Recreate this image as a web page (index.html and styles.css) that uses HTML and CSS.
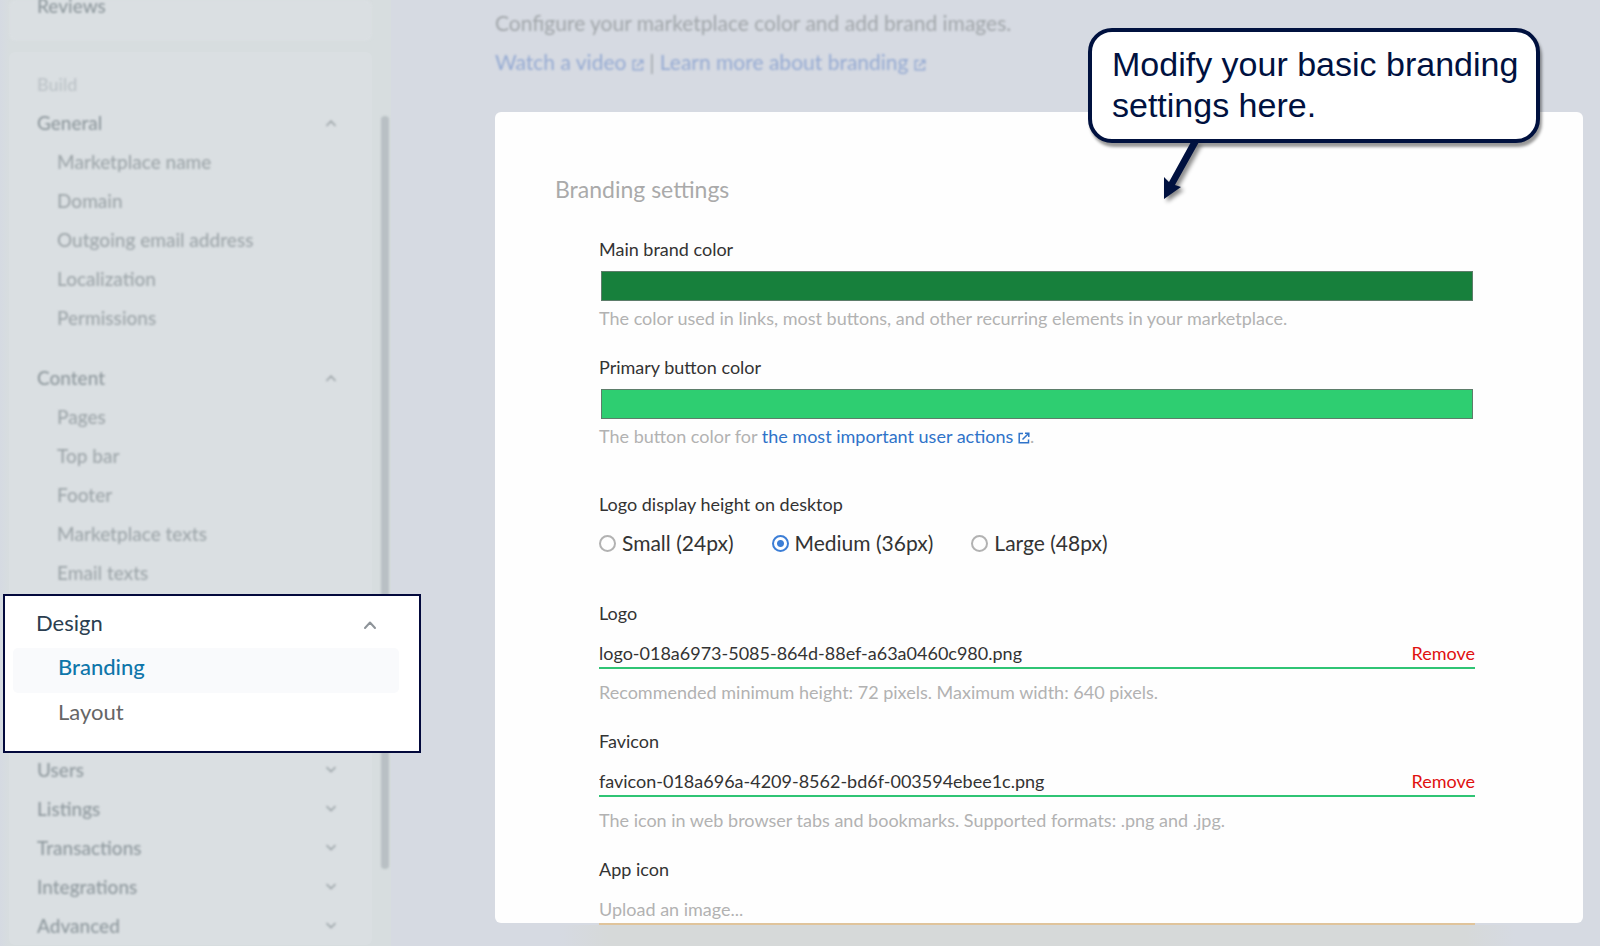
FILE: index.html
```html
<!DOCTYPE html>
<html lang="en">
<head>
<meta charset="utf-8">
<title>Branding settings</title>
<link rel="stylesheet" href="styles.css">
</head>
<body>
<svg class="sprite" aria-hidden="true">
  <symbol id="up" viewBox="0 0 14 10"><path d="M2 8l5-5.500 5 5.500" fill="none" stroke="currentColor" stroke-width="2" stroke-linecap="round" stroke-linejoin="round"/></symbol>
  <symbol id="down" viewBox="0 0 14 10"><path d="M2 2l5 5 5-5" fill="none" stroke="currentColor" stroke-width="2" stroke-linecap="round" stroke-linejoin="round"/></symbol>
  <symbol id="external" viewBox="0 0 12 12"><path d="M5 1.500H1.200V10.800H10.500V7.500M7 1.200H10.800V5M10.500 1.500L4.500 7.500" fill="none" stroke="currentColor" stroke-width="1.500"/></symbol>
</svg>
<div class="app">
  <aside class="sidebar">
    <nav class="cards">
      <div class="card card-top faded"><a class="row section" href="#">Reviews</a></div>
      <div class="card card-build">
        <div class="group faded">
          <span class="row caption">Build</span>
          <button class="row section">General<svg class="chevron"><use href="#up"/></svg></button>
          <a class="row item" href="#">Marketplace name</a>
          <a class="row item" href="#">Domain</a>
          <a class="row item" href="#">Outgoing email address</a>
          <a class="row item" href="#">Localization</a>
          <a class="row item" href="#">Permissions</a>
        </div>
        <div class="group faded">
          <button class="row section">Content<svg class="chevron"><use href="#up"/></svg></button>
          <a class="row item" href="#">Pages</a>
          <a class="row item" href="#">Top bar</a>
          <a class="row item" href="#">Footer</a>
          <a class="row item" href="#">Marketplace texts</a>
          <a class="row item" href="#">Email texts</a>
        </div>
        <div class="spotlight">
          <button class="spot-row">Design<svg class="chevron"><use href="#up"/></svg></button>
          <a class="spot-row spot-item active" href="#">Branding</a>
          <a class="spot-row spot-item" href="#">Layout</a>
        </div>
        <div class="group faded">
          <button class="row section">Users<svg class="chevron"><use href="#down"/></svg></button>
          <button class="row section">Listings<svg class="chevron"><use href="#down"/></svg></button>
          <button class="row section">Transactions<svg class="chevron"><use href="#down"/></svg></button>
          <button class="row section">Integrations<svg class="chevron"><use href="#down"/></svg></button>
          <button class="row section">Advanced<svg class="chevron"><use href="#down"/></svg></button>
        </div>
      </div>
    </nav>
    <div class="track"><div class="thumb"></div></div>
  </aside>
  <main class="main">
    <div class="intro">
      <p>Configure your marketplace color and add brand images.</p>
      <p><a href="#">Watch a video <svg class="external"><use href="#external"/></svg></a> | <a href="#">Learn more about branding <svg class="external"><use href="#external"/></svg></a></p>
    </div>
    <section class="panel">
      <h1>Branding settings</h1>
      <form class="fields">
        <div class="field">
          <label for="brand">Main brand color</label>
          <input class="swatch" type="color" id="brand" value="#17803c">
          <p class="help">The color used in links, most buttons, and other recurring elements in your marketplace.</p>
        </div>
        <div class="field">
          <label for="primary">Primary button color</label>
          <input class="swatch" type="color" id="primary" value="#2ece71">
          <p class="help">The button color for <a href="#">the most important user actions <svg class="external"><use href="#external"/></svg></a>.</p>
        </div>
        <fieldset class="field sizes">
          <legend>Logo display height on desktop</legend>
          <div class="options">
            <label><input type="radio" name="size">Small (24px)</label>
            <label><input type="radio" name="size" checked>Medium (36px)</label>
            <label><input type="radio" name="size">Large (48px)</label>
          </div>
        </fieldset>
        <div class="field">
          <label for="logo">Logo</label>
          <div class="file"><input type="text" id="logo" value="logo-018a6973-5085-864d-88ef-a63a0460c980.png" readonly><button type="button">Remove</button></div>
          <p class="help">Recommended minimum height: 72 pixels. Maximum width: 640 pixels.</p>
        </div>
        <div class="field">
          <label for="favicon">Favicon</label>
          <div class="file"><input type="text" id="favicon" value="favicon-018a696a-4209-8562-bd6f-003594ebee1c.png" readonly><button type="button">Remove</button></div>
          <p class="help">The icon in web browser tabs and bookmarks. Supported formats: .png and .jpg.</p>
        </div>
        <div class="field">
          <label for="appicon">App icon</label>
          <div class="file pending"><input type="text" id="appicon" placeholder="Upload an image..." readonly></div>
        </div>
      </form>
    </section>
  </main>
  <div class="callout">
    Modify your basic branding settings here.
    <svg class="arrow" viewBox="0 0 54 66"><path d="M43 2H51L27 45L33 47L16 59V37L21 42Z" fill="#00113f"/></svg>
  </div>
</div>
</body>
</html>
```
FILE: styles.css
```css
* { box-sizing: border-box; }
body { margin: 0; font-family: Lato, sans-serif; font-size: 18px; line-height: 24px; color: #333; background: #d6dae2; }
p, h1, fieldset, legend { margin: 0; padding: 0; border: 0; }
a { text-decoration: none; color: inherit; }
button { border: 0; padding: 0; background: none; font: inherit; color: inherit; text-align: left; }
.sprite { position: absolute; width: 0; height: 0; }
.app { position: relative; display: flex; height: 100vh; overflow: hidden; }

.sidebar { flex: 0 0 391px; display: flex; padding-left: 9px; background: linear-gradient(90deg, #d5dae2, #d7dddf 9px); }
.cards { flex: 0 0 363px; display: flex; flex-direction: column; gap: 11px; }
.card { background: #dadfe2; border-radius: 6px; }
.card-top { height: 41px; padding-bottom: 16px; display: flex; flex-direction: column; justify-content: flex-end; }
.card-build { padding-top: 12px; }
.group + .group { margin-top: 21px; }
.faded { filter: blur(1px); }
.row { display: flex; flex: none; align-items: center; justify-content: space-between; width: 100%; height: 39px; padding: 0 35px 0 28px; font-size: 19px; font-weight: 500; color: #9ea6aa; }
.row.section { color: #8f999e; }
.row.caption { color: #bcc3c7; font-size: 18px; }
.row.item { padding-left: 48px; }
.chevron { width: 14px; height: 10px; flex: none; }
.row .chevron { width: 12px; height: 8px; color: #a0a8ac; }
.spotlight { position: relative; z-index: 1; margin: 2px -49px -3px -6px; padding: 7px 20px 13px 8px; border: 2px solid #03093c; background: #fff; }
.spot-row { display: flex; align-items: center; justify-content: space-between; width: 100%; height: 45px; padding: 0 22px 6px 23px; border-radius: 5px; font-size: 22px; color: #2b3e50; }
.spot-row .chevron { margin-top: 4px; color: #8e9499; }
.spot-item { padding: 0 22px 8px 45px; color: #666; }
.spot-item.active { background: #f9fafc; color: #0f76aa; font-weight: 500; }
.track { flex: 1; padding: 116px 0 0 9px; }
.thumb { width: 8px; height: calc(100vh - 193px); border-radius: 4px; background: #b9c0c4; filter: blur(1px); }

.main { flex: 1; min-width: 0; padding: 11px 17px 0 104px; }
.intro { display: grid; gap: 15px; padding-bottom: 38px; font-size: 21px; color: #a1a6aa; filter: blur(1px); }
.intro a { color: #95aad2; }
.external { width: 12px; height: 12px; vertical-align: -1px; }
.panel { padding: 61px 108px 0 60px; background: #fefefe; border-radius: 6px; }
h1 { font-size: 23px; line-height: 32px; font-weight: 400; color: #aaa; }
.fields { display: grid; padding: 32px 0 0 44px; }
.field { display: grid; margin-bottom: 25px; }
.field:last-child { margin-bottom: -2px; }
.swatch { appearance: none; width: auto; height: 30px; margin: 10px 2px 5px; padding: 0; border: 1px solid #5d7d6a; background: none; }
.swatch::-webkit-color-swatch-wrapper { padding: 0; }
.swatch::-webkit-color-swatch { border: 0; border-radius: 0; }
.help { color: #b2b2b2; }
.help a { color: #2f73c9; }
.sizes { margin: 19px 0 46px; }
.options { display: flex; gap: 38px; padding-top: 15px; font-size: 21px; }
.options label { display: flex; align-items: center; gap: 6px; }
.options input { appearance: none; width: 17px; height: 17px; margin: 0; border: 2px solid #b2b2b2; border-radius: 50%; }
.options input:checked { border-color: #3c7ed6; background: radial-gradient(circle, #3c7ed6 3px, #fff 4px); }
.file { display: flex; margin: 16px 0 11px; padding-bottom: 2px; border-bottom: 2px solid #2fc474; }
.file input { flex: 1; min-width: 0; height: 24px; border: 0; padding: 0; font: inherit; color: #333; background: none; outline: 0; }
.file input::placeholder { color: #b2b2b2; opacity: 1; }
.file button { color: #e01010; }
.file.pending { position: relative; margin-bottom: 0; border-color: #e0c49b; }
.file.pending::after { content: ""; position: absolute; top: 28px; left: -40px; right: -40px; height: 24px; background: linear-gradient(90deg, #d6d9d900, #d6d9d9 50px, #d6d9d9 calc(100% - 50px), #d6d9d900); }

.callout { position: absolute; top: 28px; right: 60px; width: 452px; height: 115px; padding: 12px 12px 12px 20px; border: 4px solid #00113f; border-radius: 24px; background: #fff; color: #00113f; font: 34px/41px "Liberation Sans", sans-serif; box-shadow: 2px 4px 3px #0006; }
.arrow { position: absolute; left: 56px; top: 108px; width: 54px; height: 66px; filter: drop-shadow(3px 3px 2px #0007); }
```
